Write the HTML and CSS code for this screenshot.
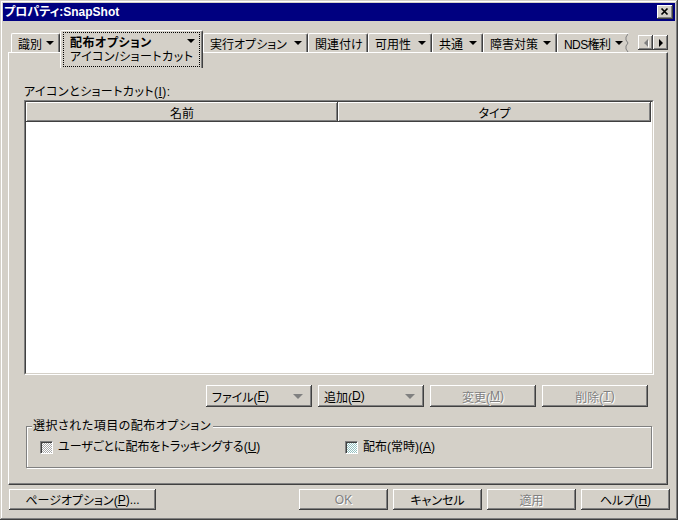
FILE: index.html
```html
<!DOCTYPE html>
<html lang="ja">
<head>
    <meta charset="UTF-8">
    <title>プロパティ:SnapShot</title>
    <link rel="stylesheet" href="styles.css">
</head>
<body>
    <div class="window">
        <div class="titlebar">
            <span class="title">プロパティ:SnapShot</span>
            <div class="close-btn">
                <svg width="16" height="14" viewBox="0 0 16 14">
                    <path d="M4.5 3.5 L10.5 9.5 M10.5 3.5 L4.5 9.5" stroke="#000" stroke-width="1.7" fill="none"/>
                </svg>
            </div>
        </div>

        <div class="tabstrip">
            <div class="tabs">
                <div class="tab tab-ident"><span>識別</span><i class="arrow"></i></div>
                <div class="tab tab-dist active">
                    <div class="focus">
                        <div class="line bold"><span>配布オプション</span><i class="arrow"></i></div>
                        <div class="line">アイコン/ショートカット</div>
                    </div>
                </div>
                <div class="tab tab-exec"><span>実行オプション</span><i class="arrow"></i></div>
                <div class="tab tab-assoc"><span>関連付け</span></div>
                <div class="tab tab-avail"><span>可用性</span><i class="arrow"></i></div>
                <div class="tab tab-common"><span>共通</span><i class="arrow"></i></div>
                <div class="tab tab-fault"><span>障害対策</span><i class="arrow"></i></div>
                <div class="tab tab-nds">
                    <span class="nds">NDS権利</span><i class="arrow"></i>
                    <svg class="jag" width="4" height="18" viewBox="0 0 4 18">
                        <polyline points="3,0 1,3 1,6 3,9 1,12 1,15 3,18" stroke="#808080" fill="none"/>
                    </svg>
                </div>
            </div>
            <div class="spin">
                <div class="spin-btn"><i class="tri-left"></i></div>
                <div class="spin-btn"><i class="tri-right"></i></div>
            </div>
        </div>

        <div class="panel">
            <div class="label">アイコンとショートカット(<u>I</u>):</div>
            <div class="list">
                <div class="list-inner">
                    <div class="list-head">
                        <div class="col col-name">名前</div>
                        <div class="col col-type">タイプ</div>
                    </div>
                </div>
            </div>

            <div class="btn-row">
                <button class="btn btn-menu">ファイル(<u>F</u>)<i class="arrow gray"></i></button>
                <button class="btn btn-menu">追加(<u>D</u>)<i class="arrow gray"></i></button>
                <button class="btn disabled">変更(<u>M</u>)</button>
                <button class="btn disabled">削除(<u>T</u>)</button>
            </div>

            <div class="groupbox">
                <div class="group-title">選択された項目の配布オプション</div>
                <div class="check-row">
                    <label class="check check-track"><span class="box"></span>ユーザごとに配布をトラッキングする(<u>U</u>)</label>
                    <label class="check"><span class="box cyan"></span>配布(常時)(<u>A</u>)</label>
                </div>
            </div>
        </div>

        <div class="footer">
            <button class="btn btn-page">ページオプション(<u>P</u>)...</button>
            <button class="btn disabled">OK</button>
            <button class="btn">キャンセル</button>
            <button class="btn disabled">適用</button>
            <button class="btn">ヘルプ(<u>H</u>)</button>
        </div>
    </div>
</body>
</html>
```

FILE: styles.css
```css
* {
    box-sizing: border-box;
}
body {
    margin: 0;
    background: #d4d0c8;
    font-family: "Liberation Sans", "Noto Sans CJK JP", sans-serif;
    font-size: 12px;
    color: #000;
    font-feature-settings: "palt";
}
u {
    text-decoration: underline;
    text-underline-offset: 1px;
}
.window {
    width: 678px;
    height: 520px;
    padding: 3px;
    background: #d4d0c8;
    box-shadow: inset -1px -1px #404040, inset 1px 1px #d4d0c8, inset -2px -2px #808080, inset 2px 2px #fff;
    display: flex;
    flex-direction: column;
}

/* title bar */
.titlebar {
    height: 18px;
    background: #000080;
    display: flex;
    align-items: center;
    justify-content: space-between;
    padding: 0 2px 0 1px;
}
.title {
    color: #fff;
    font-weight: bold;
    line-height: 18px;
}
.close-btn {
    width: 16px;
    height: 14px;
    background: #d4d0c8;
    box-shadow: inset -1px -1px #404040, inset 1px 1px #fff, inset -2px -2px #808080;
}
.close-btn svg {
    display: block;
}

/* tabs */
.tabstrip {
    display: flex;
    height: 22px;
    margin-top: 9px;
    padding-left: 8px;
}
.tabs {
    display: flex;
    align-items: flex-start;
}
.tab {
    height: 19px;
    margin-top: 3px;
    display: flex;
    align-items: center;
    padding: 0 5px 0 6px;
    border-left: 1px solid #fff;
    border-top: 1px solid #fff;
    border-right: 1px solid #404040;
    border-radius: 2px 2px 0 0;
    box-shadow: inset -1px 0 #808080;
    white-space: nowrap;
}
.tab-ident { width: 49px; }
.tab-dist { width: 143px; }
.tab-exec { width: 105px; }
.tab-assoc { width: 60px; }
.tab-avail { width: 64px; }
.tab-common { width: 51px; }
.tab-fault { width: 74px; }
.tab-nds {
    width: 72px;
    border-right: none;
    box-shadow: none;
    padding-right: 0;
}
.nds {
    letter-spacing: -0.6px;
}
.tab-nds .jag {
    margin-left: 2px;
    flex: none;
}
.arrow {
    display: block;
    width: 0;
    height: 0;
    margin-left: auto;
    border-left: 4px solid transparent;
    border-right: 4px solid transparent;
    border-top: 4px solid #000;
    flex: none;
}
.tab-nds .arrow {
    margin-left: 5px;
}
.arrow.gray {
    border-left-width: 5px;
    border-right-width: 5px;
    border-top: 5px solid #808080;
}
.tab.active {
    height: 38px;
    margin-top: 0;
    padding: 1px 2px 0 2px;
    display: block;
    position: relative;
    z-index: 1;
    background: #d4d0c8;
}
.focus {
    height: 35px;
    border: 1px dotted #000;
    padding: 1px 4px 0 6px;
}
.focus .line {
    display: flex;
    align-items: center;
    height: 14px;
    letter-spacing: 0.5px;
}
.bold {
    font-weight: bold;
}
.spin {
    display: flex;
    margin: 5px 0 0 9px;
}
.spin-btn {
    width: 15px;
    height: 15px;
    display: flex;
    align-items: center;
    justify-content: center;
    box-shadow: inset -1px -1px #404040, inset 1px 1px #fff, inset -2px -2px #808080;
}
.tri-left {
    width: 0;
    height: 0;
    border-top: 4px solid transparent;
    border-bottom: 4px solid transparent;
    border-right: 4px solid #808080;
    filter: drop-shadow(1px 1px 0 #fff);
}
.tri-right {
    width: 0;
    height: 0;
    margin-left: 1px;
    border-top: 4px solid transparent;
    border-bottom: 4px solid transparent;
    border-left: 4px solid #000;
}

/* page */
.panel {
    width: 660px;
    height: 433px;
    margin-left: 5px;
    border-left: 1px solid #fff;
    border-top: 1px solid #fff;
    border-right: 1px solid #404040;
    border-bottom: 1px solid #404040;
    box-shadow: inset -1px -1px #808080;
    padding: 32px 0 0 15px;
}
.label {
    line-height: 14px;
    height: 14px;
    letter-spacing: 0.45px;
}
.list {
    width: 630px;
    height: 275px;
    margin-top: 1px;
    border-top: 1px solid #808080;
    border-left: 1px solid #808080;
    border-right: 1px solid #fff;
    border-bottom: 1px solid #fff;
}
.list-inner {
    height: 100%;
    background: #fff;
    border-top: 1px solid #404040;
    border-left: 1px solid #404040;
    border-right: 1px solid #d4d0c8;
    border-bottom: 1px solid #d4d0c8;
}
.list-head {
    display: flex;
}
.col {
    height: 20px;
    display: flex;
    align-items: center;
    justify-content: center;
    background: #d4d0c8;
    box-shadow: inset -1px -1px #404040, inset 1px 1px #fff, inset -2px -2px #808080;
}
.col-name { width: 312px; }
.col-type { width: 313px; }

.btn {
    font: inherit;
    color: #000;
    background: #d4d0c8;
    border: none;
    padding: 0;
    box-shadow: inset -1px -1px #404040, inset 1px 1px #fff, inset -2px -2px #808080;
    display: flex;
    align-items: center;
    justify-content: center;
    white-space: nowrap;
}
.btn.disabled {
    color: #808080;
    text-shadow: 1px 1px 0 #fff;
}
.btn-row {
    width: 630px;
    height: 22px;
    margin-top: 10px;
    padding-right: 6px;
    display: flex;
    justify-content: flex-end;
    gap: 6px;
}
.btn-row .btn {
    width: 106px;
    height: 22px;
}
.btn-row .btn-menu {
    justify-content: flex-start;
    padding: 0 9px 0 6px;
}

.groupbox {
    width: 626px;
    height: 42px;
    margin: 19px 0 0 2px;
    border: 1px solid #808080;
    box-shadow: inset 1px 1px #fff, 1px 1px #fff;
}
.group-title {
    width: max-content;
    margin: -8px 0 0 5px;
    padding: 0 2px 0 1px;
    line-height: 14px;
    letter-spacing: 0.5px;
    background: #d4d0c8;
}
.check-row {
    display: flex;
    margin-top: 7px;
    padding-left: 13px;
    line-height: 14px;
}
.check {
    display: flex;
    align-items: center;
    white-space: nowrap;
}
.check-track {
    width: 305px;
}
.box {
    width: 13px;
    height: 13px;
    margin-right: 5px;
    border-top: 1px solid #808080;
    border-left: 1px solid #808080;
    border-right: 1px solid #fff;
    border-bottom: 1px solid #fff;
    box-shadow: inset 1px 1px #404040;
    background: repeating-conic-gradient(#fff 0 25%, #a8a8a8 0 50%) 0 0 / 2px 2px;
}
.box.cyan {
    background: repeating-conic-gradient(#fff 0 25%, #94c0c0 0 50%) 0 0 / 2px 2px;
}

/* dialog buttons */
.footer {
    display: flex;
    gap: 5px;
    margin-top: 4px;
    padding: 0 5px 0 6px;
}
.footer .btn {
    width: 89px;
    height: 21px;
}
.footer .btn-page {
    width: 147px;
    margin-right: auto;
}
```
